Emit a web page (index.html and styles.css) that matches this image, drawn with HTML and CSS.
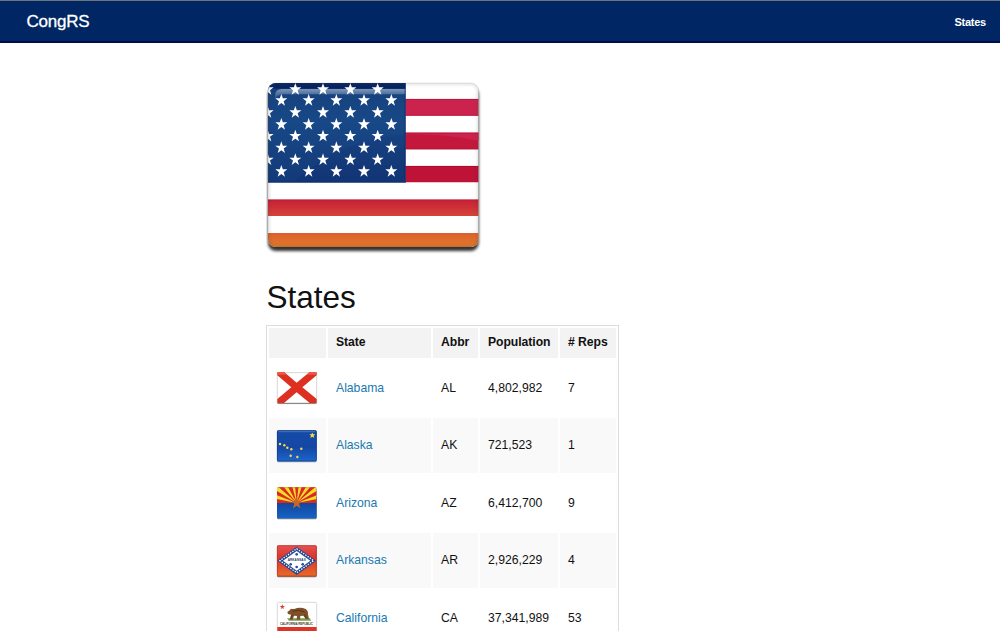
FILE: index.html
```html
<!DOCTYPE html>
<html lang="en">
<head>
<meta charset="utf-8">
<title>CongRS</title>
<link rel="stylesheet" href="styles.css">
</head>
<body>
<nav class="topbar"><a class="brand">CongRS</a><a class="nav-link">States</a></nav>
<main class="content">
<svg class="hero" viewBox="33 18 648 522">
  <defs>
    <path id="star" d="M0-19 4.5-6H18L7 2.500 11 16 0 8-11 16-7 2.500-18-6H-4.500Z" fill="#fff"/>
    <g id="rowA"><use href="#star" x="38"/><use href="#star" x="121"/><use href="#star" x="204"/><use href="#star" x="286"/><use href="#star" x="368"/></g>
    <g id="rowB"><use href="#star" x="79"/><use href="#star" x="161"/><use href="#star" x="244"/><use href="#star" x="327"/><use href="#star" x="409"/></g>
    <clipPath id="flagShape"><rect x="39" y="24" width="632" height="492" rx="24"/></clipPath>
    <clipPath id="canton"><rect x="39" y="24" width="412" height="298"/></clipPath>
    <linearGradient id="blue" x1="0" y1="0" x2="0" y2="1"><stop offset="0" stop-color="#153c78"/><stop offset=".4" stop-color="#174584"/><stop offset="1" stop-color="#123474"/></linearGradient>
    <linearGradient id="red" x1="0" y1="0" x2="0" y2="1"><stop offset="0" stop-color="#c71f35"/><stop offset="1" stop-color="#d4443a"/></linearGradient>
    <linearGradient id="orange" x1="0" y1="0" x2="0" y2="1"><stop offset="0" stop-color="#dc602c"/><stop offset="1" stop-color="#e2792b"/></linearGradient>
    <linearGradient id="shine" x1="0" y1="0" x2="0" y2="1"><stop offset="0" stop-color="#fff" stop-opacity=".45"/><stop offset="1" stop-color="#fff" stop-opacity="0"/></linearGradient>
    <filter id="soft" x="-10%" y="-10%" width="120%" height="120%"><feGaussianBlur stdDeviation="5"/></filter>
  </defs>
  <rect x="39" y="36" width="632" height="492" rx="24" fill="#000" opacity=".8" filter="url(#soft)"/>
  <g clip-path="url(#flagShape)">
    <rect x="39" y="24" width="632" height="492" fill="#fff"/>
    <path d="M451 72h220v50H451z" fill="#cb234d"/><path d="M451 173h220v50H451z" fill="#c4173c"/><path d="M451 273h220v49H451z" fill="#be1237"/>
    <path d="M451 173h220v24Q560 176 451 178Z" fill="#cb234d"/>
    <path d="M39 374h632v49H39z" fill="url(#red)"/><path d="M39 374h632M451 73h220M451 121h220M451 174h220M451 222h220M451 274h220" stroke="#a90020" stroke-width="3" opacity=".5"/>
    <path d="M39 474h632v42H39z" fill="url(#orange)"/>
    <path d="M39 24h412v298H39z" fill="url(#blue)"/>
    <path d="M39 322V24H451V178Q260 190 115 322Z" fill="#2563a0" opacity=".12"/>
    <rect x="39" y="24" width="412" height="17" fill="#001554" opacity=".65"/>
    <path d="M60 75V63Q60 42 82 42H451V58H86Q66 58 60 75Z" fill="url(#shine)"/>
    <g clip-path="url(#canton)"><use href="#rowA" y="43"/><use href="#rowB" y="76"/><use href="#rowA" y="112"/><use href="#rowB" y="148"/><use href="#rowA" y="183"/><use href="#rowB" y="218"/><use href="#rowA" y="254"/><use href="#rowB" y="289"/></g>
    <path d="M39 322H451V24" fill="none" stroke="#001d66" stroke-width="4" opacity=".6"/>
    <rect x="39" y="24" width="632" height="492" rx="24" fill="none" stroke="#444" stroke-width="10" opacity=".16" filter="url(#soft)"/>
  </g>
  <rect x="39" y="24" width="632" height="492" rx="24" fill="none" stroke="#555" stroke-width="2" opacity=".2"/>
</svg>
<h1 class="title">States</h1>
<div class="states" role="table">
  <div class="row head" role="row"><span class="cell"></span><span class="cell">State</span><span class="cell">Abbr</span><span class="cell">Population</span><span class="cell"># Reps</span></div>
  <div class="row" role="row"><span class="cell pic"><svg class="flag" viewBox="35 19 126 102">
    <rect x="39" y="24" width="118" height="93" rx="3" fill="#fff" stroke="#c3c3c3" stroke-width="2"/><path d="M40 116H156" stroke="#777" stroke-width="3"/>
    <path d="M39 23H60L97 54 135 23H157V32L114 68 157 103V115H136L97 83 59 115H39V103L81 68 39 32Z" fill="#de3020"/><path d="M39 23H60L68 30H39ZM127 30 135 23H157V30Z" fill="#ea5848"/></svg></span><span class="cell"><a class="link">Alabama</a></span><span class="cell">AL</span><span class="cell">4,802,982</span><span class="cell">7</span></div>
  <div class="row alt" role="row"><span class="cell pic"><svg class="flag" viewBox="35 19 126 102">
    <defs><linearGradient id="akBlue" x1="0" y1="0" x2="0" y2="1"><stop offset="0" stop-color="#164ba6"/><stop offset=".55" stop-color="#1447a5"/><stop offset="1" stop-color="#1d66cb"/></linearGradient></defs>
    <rect x="38" y="25" width="119" height="94" rx="4" fill="#99a3b3"/><rect x="38" y="23" width="119" height="93" rx="4" fill="url(#akBlue)"/><path d="M42 27H153" stroke="#4a78c0" stroke-width="3"/><rect x="39" y="24" width="117" height="91" rx="4" fill="none" stroke="#113a86" stroke-width="2"/>
    <g fill="#f5d848"><path d="M144 30l3 5h6l-5 4 2 7-6-4-6 4 2-7-5-4h6z"/><circle cx="47" cy="64" r="3.700"/><circle cx="60" cy="68" r="3.700"/><circle cx="69" cy="75" r="3.700"/><circle cx="81" cy="80" r="3.700"/><circle cx="111" cy="78" r="3.700"/><circle cx="79" cy="99" r="3.700"/><circle cx="99" cy="103" r="3.700"/></g></svg></span><span class="cell"><a class="link">Alaska</a></span><span class="cell">AK</span><span class="cell">721,523</span><span class="cell">1</span></div>
  <div class="row" role="row"><span class="cell pic"><svg class="flag" viewBox="35 19 126 102">
    <defs><clipPath id="azTop"><path d="M38 25Q38 22 42 22H153Q157 22 157 26V70H38Z"/></clipPath><linearGradient id="azBlue" x1="0" y1="0" x2="0" y2="1"><stop offset="0" stop-color="#103b8d"/><stop offset="1" stop-color="#1663c4"/></linearGradient></defs>
    <rect x="38" y="25" width="119" height="94" rx="4" fill="#78818d"/><rect x="38" y="50" width="119" height="66" rx="4" fill="url(#azBlue)"/>
    <g clip-path="url(#azTop)"><path d="M38 22h119v48H38z" fill="#fadc29"/><path d="M97 70 28 70V56ZM97 70 28 43V28ZM97 70 38 18H55ZM97 70 69 18H83ZM97 70 92 18H103ZM97 70 113 18H127ZM97 70 141 18H158ZM97 70 167 28V43ZM97 70 167 56V70Z" fill="#da2a24"/><path d="M38 24H157" stroke="#b98534" stroke-width="3" opacity=".5"/></g>
    <path d="M97 49 101 63H114L104 72 108 86 97 78 86 86 90 72 80 63H93Z" fill="#c86626"/></svg></span><span class="cell"><a class="link">Arizona</a></span><span class="cell">AZ</span><span class="cell">6,412,700</span><span class="cell">9</span></div>
  <div class="row alt" role="row"><span class="cell pic"><svg class="flag" viewBox="35 19 126 102">
    <defs><linearGradient id="arRed" x1="0" y1="0" x2="0" y2="1"><stop offset="0" stop-color="#e35252"/><stop offset=".4" stop-color="#dc332b"/><stop offset="1" stop-color="#e66a28"/></linearGradient></defs>
    <rect x="38" y="25" width="119" height="94" rx="4" fill="#84736d"/><rect x="38" y="23" width="119" height="93" rx="4" fill="url(#arRed)"/><rect x="39" y="24" width="117" height="91" rx="4" fill="none" stroke="#b73228" stroke-width="2"/>
    <path d="M97 27 156 69 97 112 39 69Z" fill="#27478e"/><path d="M97 33 148 69 97 105 47 69Z" fill="none" stroke="#fff" stroke-width="4" stroke-dasharray="4 4"/><path d="M97 40 138 69 97 99 56 69Z" fill="#fff"/>
    <g fill="#234da0"><circle cx="97" cy="50" r="4"/><circle cx="79" cy="80" r="4"/><circle cx="115" cy="80" r="4"/><circle cx="97" cy="88" r="4"/></g><text class="arkansas" x="70" y="69" textLength="54">ARKANSAS</text></svg></span><span class="cell"><a class="link">Arkansas</a></span><span class="cell">AR</span><span class="cell">2,926,229</span><span class="cell">4</span></div>
  <div class="row" role="row"><span class="cell pic"><svg class="flag" viewBox="35 17 126 102">
    <rect x="39" y="21" width="118" height="93" rx="4" fill="#fff" stroke="#c5c5c5" stroke-width="2"/><path d="M39 95H157v18H39z" fill="#dd3428"/>
    <path d="M54 27l2 5h6l-5 4 2 6-5-4-5 4 2-6-5-4h6z" fill="#e43b35"/><path d="M68 69H137L140 76H74Z" fill="#72a04a"/><path d="M69 50 76 45 80 40Q89 43 98 38 112 35 124 41 132 46 131 57L134 70 125 72 117 61 108 62 107 73H97L98 62 89 61 85 73H76L80 58 71 56Z" fill="#805028"/><path d="M85 48Q103 40 121 50M80 70l5-12M125 69l-4-12" fill="none" stroke="#55351f" stroke-width="3"/><text class="california" x="47" y="89" textLength="99">CALIFORNIA REPUBLIC</text></svg></span><span class="cell"><a class="link">California</a></span><span class="cell">CA</span><span class="cell">37,341,989</span><span class="cell">53</span></div>
</div>
</main>
</body>
</html>
```
FILE: styles.css
```css
* { box-sizing: border-box; }
body {
  margin: 0;
  height: 631px;
  overflow: hidden;
  background: #fff;
  color: #111;
  font-family: "Liberation Sans", Arial, sans-serif;
}
.topbar {
  height: 43px;
  padding: 2px 14px 0 26.500px;
  display: flex;
  align-items: center;
  justify-content: space-between;
  border-top: 1px solid #70747c;
  border-bottom: 2px solid #000b50;
  background: #002663;
  color: #fff;
}
.brand { font-size: 17px; letter-spacing: -.25px; -webkit-text-stroke: .3px #fff; }
.nav-link { font-size: 11px; font-weight: bold; letter-spacing: -.25px; }
.content { padding: 38px 0 0 266px; }
.hero { display: block; width: 216px; height: 174px; }
.title { margin: 24px 0 10px .5px; font-size: 31.500px; line-height: 36px; font-weight: normal; }
.states {
  width: 353px;
  padding: 2px;
  border: 1px solid #ddd;
  display: flex;
  flex-direction: column;
  gap: 2px;
  font-size: 12.200px;
}
.row {
  flex: none;
  height: 55.500px;
  display: grid;
  grid-template-columns: 57px 103px 45px 78px 56px;
  column-gap: 2px;
}
.cell { display: flex; align-items: center; padding-left: 8px; }
.head { height: 30px; font-weight: bold; }
.head .cell { background: #f3f3f3; padding-bottom: 2px; letter-spacing: -.05px; }
.alt .cell { background: #f9f9f9; }
.pic { padding: 1px 0 0 7px; }
.flag { width: 42px; height: 34px; }
.link { color: #2079b0; }
.arkansas { font-size: 9px; font-weight: bold; fill: #243a65; }
.california { font-size: 9px; font-weight: bold; fill: #50372a; }
```
